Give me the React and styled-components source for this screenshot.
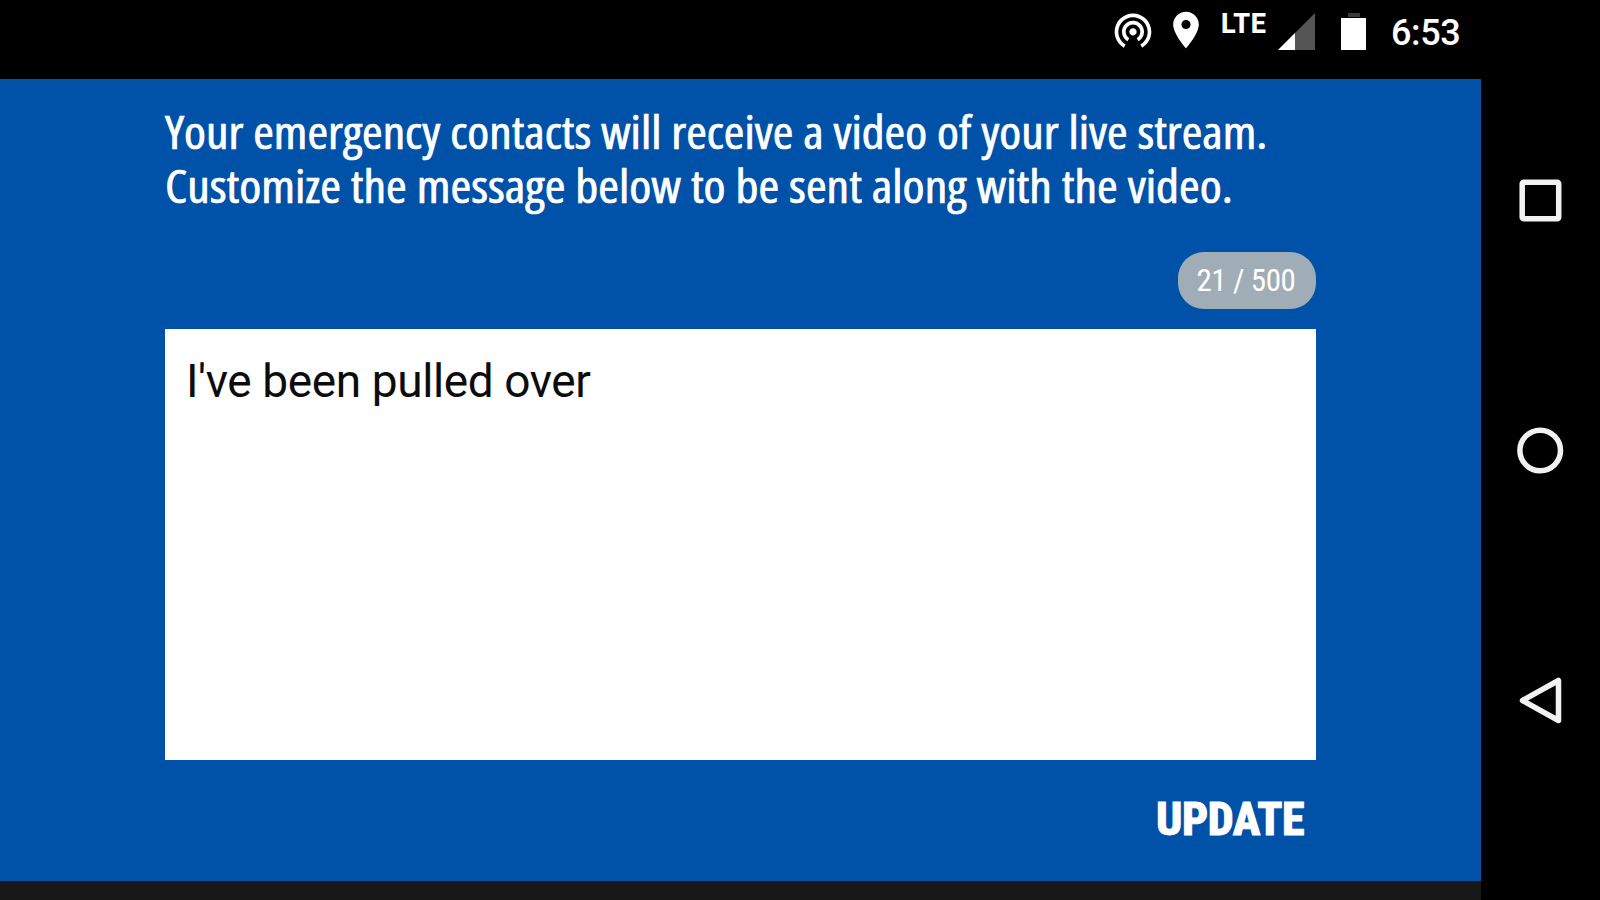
import React, { useState } from 'react';
import styled, { createGlobalStyle } from 'styled-components';
import { MdLocationOn, MdWifiTethering } from 'react-icons/md';

const GlobalStyle = createGlobalStyle`
  * {
    box-sizing: border-box;
  }
  body {
    margin: 0;
    background-color: #000;
    font-family: Roboto, sans-serif;
    overflow: hidden;
  }
`;

const Screen = styled.div`
  width: 1600px;
  height: 900px;
  display: flex;
  background-color: #000;
`;

const Main = styled.div`
  width: 1481px;
  display: flex;
  flex-direction: column;
`;

const StatusBar = styled.div`
  height: 79px;
  padding: 8px 20px 0 0;
  display: flex;
  justify-content: flex-end;
  align-items: flex-start;
  color: #fff;
  > svg {
    flex-shrink: 0;
  }
`;

const LocationIcon = styled(MdLocationOn)`
  margin-left: 9px;
`;

const Network = styled.span`
  margin: 2px 0 0 13px;
  width: 45px;
  font-size: 27px;
  line-height: 28px;
  font-weight: 800;
  letter-spacing: 0.5px;
`;

const SignalIcon = styled.svg`
  margin: 5px 0 0 12px;
`;

const BatteryIcon = styled.svg`
  margin: 5px 0 0 25px;
`;

const Clock = styled.span`
  width: 70px;
  margin: 5px 0 0 25px;
  font-size: 36px;
  line-height: 40px;
  font-weight: 500;
  letter-spacing: -0.4px;
`;

const Form = styled.form`
  height: 802px;
  padding: 26px 165px 0;
  display: flex;
  flex-direction: column;
  align-items: flex-end;
  background-color: #0051a8;
`;

const Intro = styled.div`
  width: 100%;
  height: 147px;
  color: #fff;
`;

const IntroLine = styled.p`
  margin: 0;
  font-family: 'Open Sans', sans-serif;
  font-stretch: 75%;
  font-size: 45px;
  line-height: 54px;
  word-spacing: 0.6px;
  white-space: nowrap;
  -webkit-text-stroke: 0.7px #fff;
  transform: scaleX(${p => p.$stretch});
  transform-origin: left;
`;

const Counter = styled.div`
  width: 138px;
  height: 57px;
  padding-right: 2px;
  display: flex;
  justify-content: center;
  align-items: center;
  border-radius: 26px;
  background-color: #a1adb6;
  color: #fff;
  font-size: 31px;
  font-stretch: 75%;
  letter-spacing: -0.4px;
`;

const Message = styled.textarea`
  width: 1151px;
  height: 431px;
  margin-top: 20px;
  padding: 25px 21px;
  border: none;
  border-radius: 0;
  outline: none;
  resize: none;
  background-color: #fff;
  color: #0c0c0c;
  font-family: Roboto, sans-serif;
  font-size: 46px;
  line-height: 55px;
  letter-spacing: -0.4px;
`;

const UpdateButton = styled.button`
  margin: 29px 12px 0 0;
  padding: 0;
  border: none;
  background: none;
  color: #fff;
  font-family: Roboto, sans-serif;
  font-size: 46px;
  line-height: 60px;
  font-weight: 800;
  font-stretch: 75%;
  letter-spacing: -0.5px;
  -webkit-text-stroke: 0.9px #fff;
  cursor: pointer;
`;

const BottomEdge = styled.div`
  flex: 1;
  background-color: #191818;
`;

const NavBar = styled.nav`
  flex: 1;
  padding: 175px 2px 175px 0;
  display: flex;
  flex-direction: column;
  justify-content: space-between;
  align-items: center;
`;

const NavButton = styled.button`
  width: 50px;
  height: 50px;
  padding: 0;
  border: none;
  background: none;
  svg {
    display: block;
    fill: none;
    stroke: #f2f2f2;
    stroke-width: 5.5;
    stroke-linejoin: round;
  }
`;

const MAX_LENGTH = 500;

const App = () => {
  const [message, setMessage] = useState("I've been pulled over");

  return (
    <>
      <GlobalStyle />
      <Screen>
        <Main>
          <StatusBar>
            <MdWifiTethering size={44} />
            <LocationIcon size={44} />
            <Network>LTE</Network>
            <SignalIcon width="38" height="38">
              <path d="M37 0V37H0z" fill="#555" />
              <path d="M17 20V37H0z" fill="#fff" />
            </SignalIcon>
            <BatteryIcon width="25" height="37">
              <path d="M7 0h12v4H7z" fill="#3a3a3a" />
              <path d="M0 5h25v32H0z" fill="#fff" />
            </BatteryIcon>
            <Clock>6:53</Clock>
          </StatusBar>
          <Form onSubmit={e => e.preventDefault()}>
            <Intro>
              <IntroLine $stretch={1.106}>Your emergency contacts will receive a video of your live stream.</IntroLine>
              <IntroLine $stretch={1.112}>Customize the message below to be sent along with the video.</IntroLine>
            </Intro>
            <Counter>{message.length} / {MAX_LENGTH}</Counter>
            <Message
              value={message}
              maxLength={MAX_LENGTH}
              spellCheck={false}
              onChange={e => setMessage(e.target.value)}
            />
            <UpdateButton type="submit">UPDATE</UpdateButton>
          </Form>
          <BottomEdge />
        </Main>
        <NavBar>
          <NavButton aria-label="Recent apps">
            <svg width="50" height="50"><rect x="7.2" y="7.2" width="36.5" height="36.5" rx="1.5" /></svg>
          </NavButton>
          <NavButton aria-label="Home">
            <svg width="50" height="50"><circle cx="25.2" cy="25.5" r="20.3" /></svg>
          </NavButton>
          <NavButton aria-label="Back">
            <svg width="50" height="50"><path d="M43.5 5.5V45.5L7.5 25.5z" /></svg>
          </NavButton>
        </NavBar>
      </Screen>
    </>
  );
};

export default App;
